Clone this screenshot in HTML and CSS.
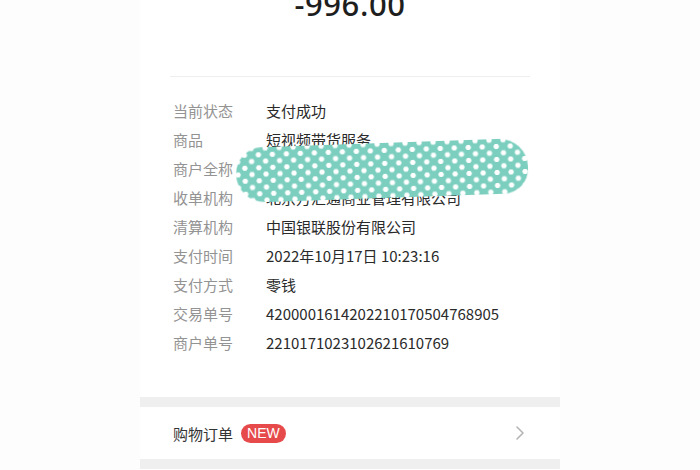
FILE: index.html
```html
<!DOCTYPE html>
<html lang="zh-CN">
<head>
<meta charset="utf-8">
<title>账单详情</title>
<link rel="stylesheet" href="styles.css">
</head>
<body>
<div class="page">
  <div class="amount-area">
    <div class="amount">-996.00</div>
  </div>
  <div class="divider"></div>
  <div class="details">
    <div class="row"><span class="label">当前状态</span><span class="value">支付成功</span></div>
    <div class="row"><span class="label">商品</span><span class="value">短视频带货服务</span></div>
    <div class="row"><span class="label">商户全称</span><span class="value">北京万汇通商业管理有限公司</span></div>
    <div class="row"><span class="label">收单机构</span><span class="value">北京万汇通商业管理有限公司</span></div>
    <div class="row"><span class="label">清算机构</span><span class="value">中国银联股份有限公司</span></div>
    <div class="row"><span class="label">支付时间</span><span class="value">2022年10月17日 10:23:16</span></div>
    <div class="row"><span class="label">支付方式</span><span class="value">零钱</span></div>
    <div class="row"><span class="label">交易单号</span><span class="value">4200001614202210170504768905</span></div>
    <div class="row"><span class="label">商户单号</span><span class="value">2210171023102621610769</span></div>
    <div class="mask"></div>
  </div>
  <div class="band"></div>
  <div class="order-row">
    <span class="order-title">购物订单</span>
    <span class="badge">NEW</span>
    <svg class="chevron" width="10" height="16" viewBox="0 0 10 16"><path d="M2 2 L8 8 L2 14" fill="none" stroke="#b5b5b5" stroke-width="1.6" stroke-linecap="round" stroke-linejoin="round"/></svg>
  </div>
  <div class="band"></div>
</div>
</body>
</html>
```
FILE: styles.css
```css
html, body {
  margin: 0;
  padding: 0;
  background: #fdfdfd;
  height: 470px;
  overflow: hidden;
}
.page {
  width: 420px;
  margin: 0 auto;
  background: #ffffff;
  font-family: "Noto Sans CJK SC", "Noto Sans", sans-serif;
  height: 470px;
}
.amount-area {
  height: 76px;
  display: flex;
  justify-content: center;
}
.amount {
  font-family: "Noto Sans", "DejaVu Sans", sans-serif;
  font-size: 31px;
  font-weight: 500;
  color: #1e1e1e;
  line-height: 30px;
  margin-top: -11px;
  letter-spacing: 0.6px;
}
.divider {
  height: 1px;
  background: #eeeeee;
  margin: 0 30px;
}
.details {
  position: relative;
  padding: 19px 0 0 33px;
  height: 301px;
}
.row {
  display: flex;
  height: 29px;
  align-items: center;
  font-size: 15px;
}
.label {
  width: 93px;
  color: #939393;
}
.value {
  color: #2a2a2a;
}
.mask {
  position: absolute;
  left: 96px;
  top: 66px;
  width: 292px;
  height: 55px;
  border-radius: 28px 30px 26px 30px;
  transform: rotate(-2deg);
  background-color: #7ccfbf;
  background-image:
    radial-gradient(circle, #ffffff 2.3px, transparent 3px),
    radial-gradient(circle, #ffffff 2.3px, transparent 3px);
  background-size: 14px 13px;
  background-position: 2px 1px, 9px 7.5px;
  filter: blur(0.4px);
}
.band {
  height: 10px;
  background: #efefef;
}
.order-row {
  height: 52px;
  display: flex;
  align-items: center;
  padding: 0 35px 0 33px;
}
.order-title {
  font-size: 15px;
  color: #333333;
}
.badge {
  margin-left: 8px;
  background: #e64a4a;
  color: #ffffff;
  font-family: "Liberation Sans", sans-serif;
  font-size: 14px;
  height: 19px;
  line-height: 19px;
  padding: 0 6px;
  border-radius: 10px;
}
.chevron {
  margin-left: auto;
}
```
